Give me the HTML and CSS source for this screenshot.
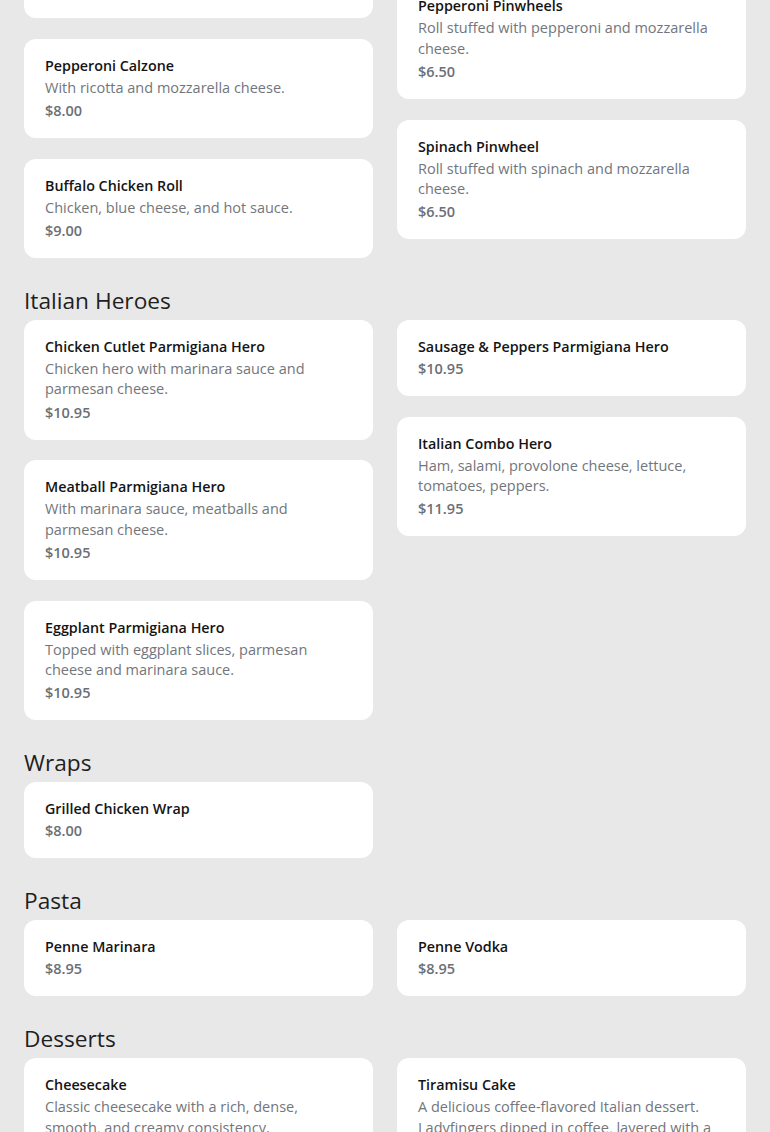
FILE: index.html
```html
<!DOCTYPE html>
<html lang="en">
<head>
<meta charset="utf-8">
<title>Menu</title>
<link rel="stylesheet" href="styles.css">
</head>
<body>
<main class="menu">
  <section class="section">
    <h2 class="section-title">Calzones &amp; Rolls</h2>
    <div class="grid">
      <div class="col">
        <div class="card">
          <div class="item-name">Cheese Calzone</div>
          <div class="item-desc">With ricotta and mozzarella cheese.</div>
          <div class="item-price">$7.50</div>
        </div>
        <div class="card">
          <div class="item-name">Chicken Roll</div>
          <div class="item-desc">With mozzarella cheese and sauce.</div>
          <div class="item-price">$8.00</div>
        </div>
        <div class="card">
          <div class="item-name">Pepperoni Calzone</div>
          <div class="item-desc">With ricotta and mozzarella cheese.</div>
          <div class="item-price">$8.00</div>
        </div>
        <div class="card">
          <div class="item-name">Buffalo Chicken Roll</div>
          <div class="item-desc">Chicken, blue cheese, and hot sauce.</div>
          <div class="item-price">$9.00</div>
        </div>
      </div>
      <div class="col">
        <div class="card">
          <div class="item-name">Stromboli</div>
          <div class="item-desc">Rolled dough stuffed with ham, salami, pepperoni and mozzarella cheese, brushed with garlic butter and baked until golden brown. Served with a side of marinara sauce.</div>
          <div class="item-price">$9.50</div>
        </div>
        <div class="card">
          <div class="item-name">Pepperoni Pinwheels</div>
          <div class="item-desc">Roll stuffed with pepperoni and mozzarella cheese.</div>
          <div class="item-price">$6.50</div>
        </div>
        <div class="card">
          <div class="item-name">Spinach Pinwheel</div>
          <div class="item-desc">Roll stuffed with spinach and mozzarella cheese.</div>
          <div class="item-price">$6.50</div>
        </div>
      </div>
    </div>
  </section>

  <section class="section">
    <h2 class="section-title">Italian Heroes</h2>
    <div class="grid">
      <div class="col">
        <div class="card">
          <div class="item-name">Chicken Cutlet Parmigiana Hero</div>
          <div class="item-desc">Chicken hero with marinara sauce and parmesan cheese.</div>
          <div class="item-price">$10.95</div>
        </div>
        <div class="card">
          <div class="item-name">Meatball Parmigiana Hero</div>
          <div class="item-desc">With marinara sauce, meatballs and parmesan cheese.</div>
          <div class="item-price">$10.95</div>
        </div>
        <div class="card">
          <div class="item-name">Eggplant Parmigiana Hero</div>
          <div class="item-desc">Topped with eggplant slices, parmesan cheese and marinara sauce.</div>
          <div class="item-price">$10.95</div>
        </div>
      </div>
      <div class="col">
        <div class="card">
          <div class="item-name">Sausage &amp; Peppers Parmigiana Hero</div>
          <div class="item-price">$10.95</div>
        </div>
        <div class="card">
          <div class="item-name">Italian Combo Hero</div>
          <div class="item-desc">Ham, salami, provolone cheese, lettuce, tomatoes, peppers.</div>
          <div class="item-price">$11.95</div>
        </div>
      </div>
    </div>
  </section>

  <section class="section">
    <h2 class="section-title">Wraps</h2>
    <div class="grid">
      <div class="col">
        <div class="card">
          <div class="item-name">Grilled Chicken Wrap</div>
          <div class="item-price">$8.00</div>
        </div>
      </div>
      <div class="col"></div>
    </div>
  </section>

  <section class="section">
    <h2 class="section-title">Pasta</h2>
    <div class="grid">
      <div class="col">
        <div class="card">
          <div class="item-name">Penne Marinara</div>
          <div class="item-price">$8.95</div>
        </div>
      </div>
      <div class="col">
        <div class="card">
          <div class="item-name">Penne Vodka</div>
          <div class="item-price">$8.95</div>
        </div>
      </div>
    </div>
  </section>

  <section class="section">
    <h2 class="section-title">Desserts</h2>
    <div class="grid">
      <div class="col">
        <div class="card">
          <div class="item-name">Cheesecake</div>
          <div class="item-desc">Classic cheesecake with a rich, dense, smooth, and creamy consistency.</div>
          <div class="item-price">$6.00</div>
        </div>
      </div>
      <div class="col">
        <div class="card">
          <div class="item-name">Tiramisu Cake</div>
          <div class="item-desc">A delicious coffee-flavored Italian dessert. Ladyfingers dipped in coffee, layered with a whipped mixture of eggs, sugar, and mascarpone cheese.</div>
          <div class="item-price">$6.50</div>
        </div>
      </div>
    </div>
  </section>
</main>
</body>
</html>
```

FILE: styles.css
```css
html, body {
  margin: 0;
  padding: 0;
  background: #e8e8e8;
}

body {
  font-family: "Open Sans", "Noto Sans", sans-serif;
  color: #1f1f1f;
}

.menu {
  margin-top: -237.5px;
  padding: 0 24px 40px;
}

.section {
  margin-top: 26px;
}

.section:first-child {
  margin-top: 0;
}

.section-title {
  margin: 0 0 3px;
  font-size: 22.7px;
  line-height: 33px;
  font-weight: 400;
  color: #1f1f1f;
}

.grid {
  display: grid;
  grid-template-columns: 1fr 1fr;
  column-gap: 24px;
  align-items: start;
}

.col {
  display: flex;
  flex-direction: column;
  gap: 20.5px;
}

.card {
  background: #ffffff;
  border-radius: 12px;
  padding: 17px 21px;
}

.item-name {
  margin-bottom: 2px;
  font-size: 14.3px;
  line-height: 19px;
  font-weight: 600;
  color: #141414;
}

.item-desc {
  margin: 3px 0 2.25px;
  font-size: 14.5px;
  line-height: 20.25px;
  color: #72767c;
}

.item-price {
  font-size: 14.5px;
  line-height: 21px;
  font-weight: 600;
  color: #6b6f76;
}
```
